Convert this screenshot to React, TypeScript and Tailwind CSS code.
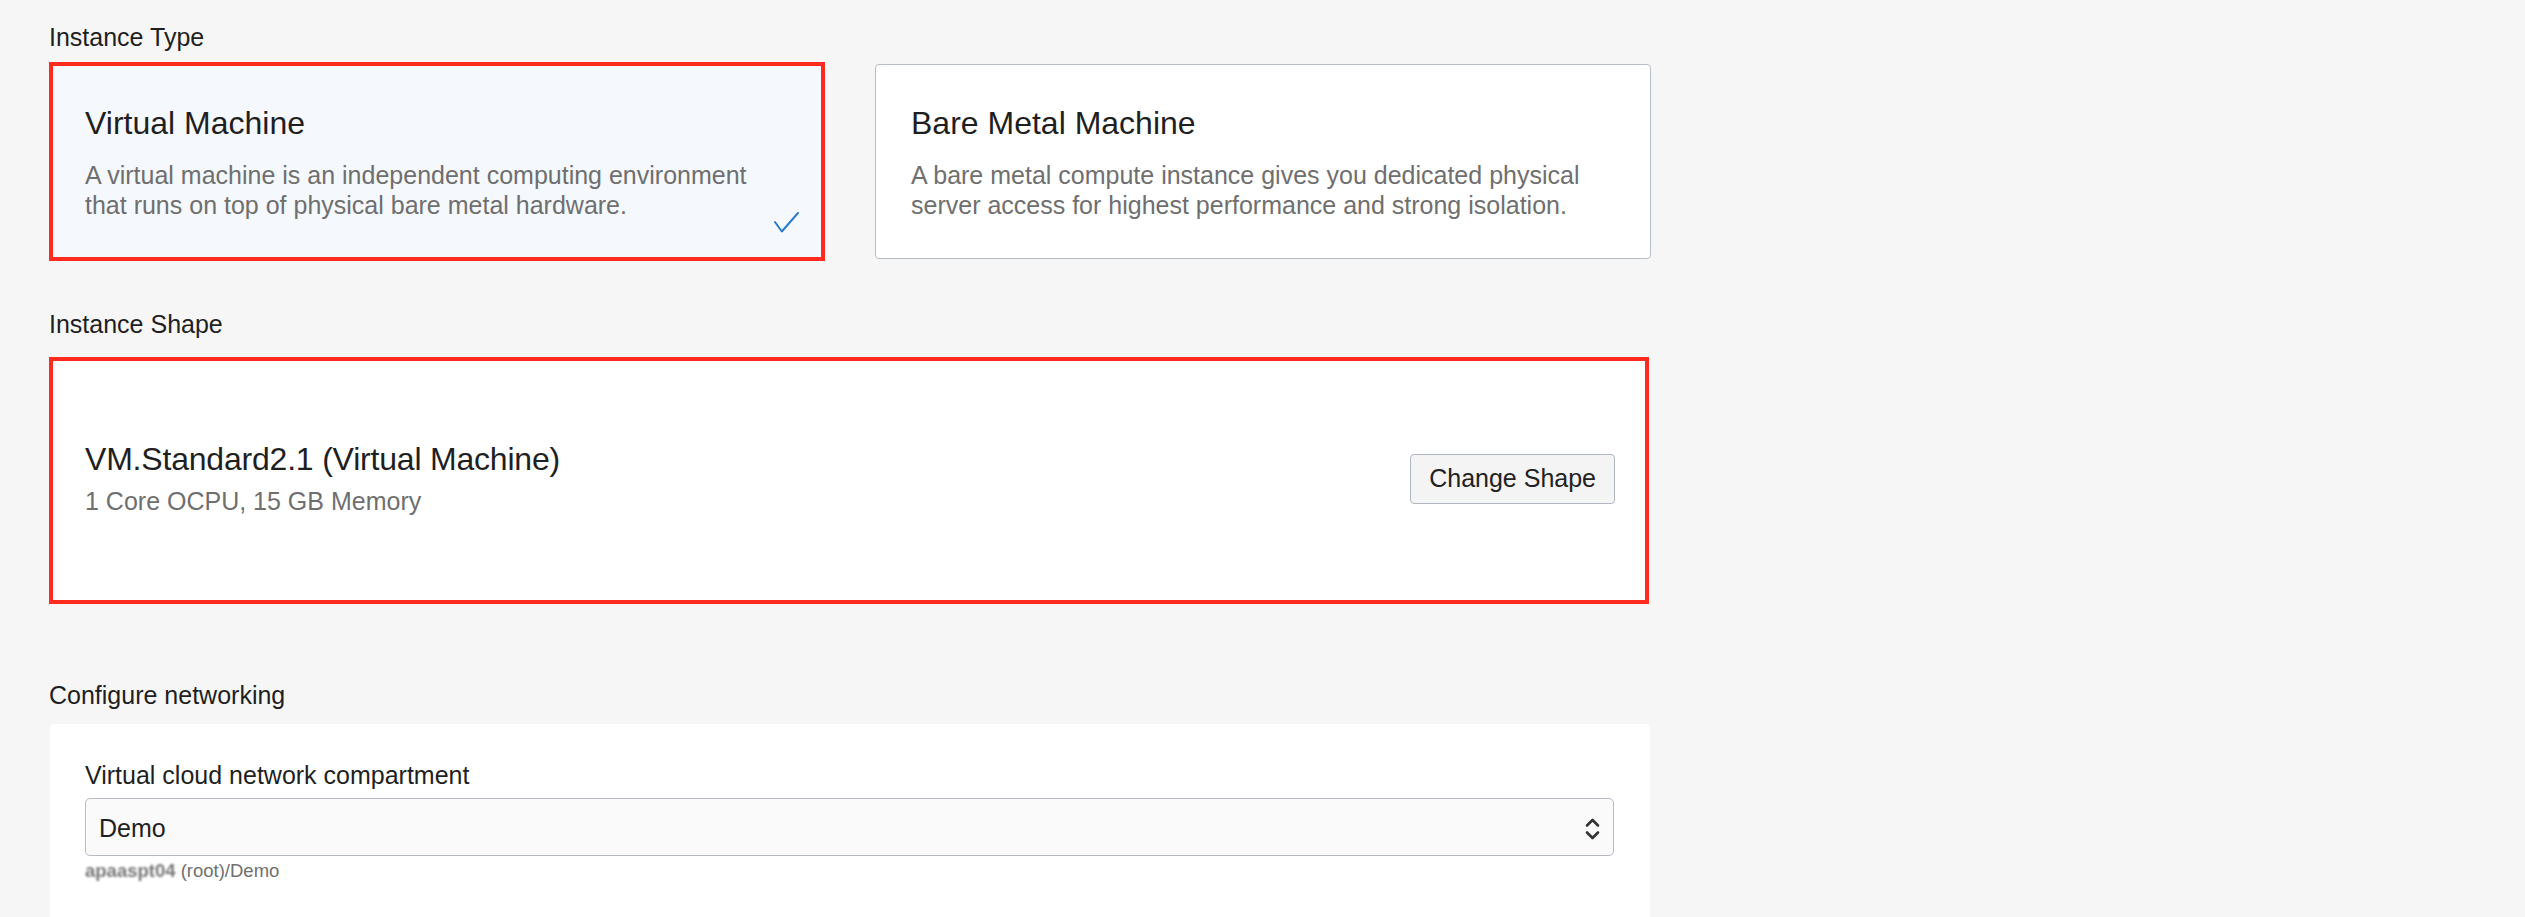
import * as React from "react";

function CheckMark() {
  return (
    <svg width="25" height="21" viewBox="0 0 25 21" fill="none">
      <path d="M1 10 L7.8 19.5 L24 1" stroke="#2a7bd0" strokeWidth="2" strokeLinecap="round" strokeLinejoin="round" />
    </svg>
  );
}

function UpDown() {
  return (
    <svg width="15" height="22" viewBox="0 0 15 22" fill="none">
      <path d="M2 7.5 L7.5 2 L13 7.5" stroke="#333" strokeWidth="2.6" strokeLinecap="round" strokeLinejoin="round" />
      <path d="M2 14.5 L7.5 20 L13 14.5" stroke="#333" strokeWidth="2.6" strokeLinecap="round" strokeLinejoin="round" />
    </svg>
  );
}

export default function App() {
  return (
    <div className="min-h-screen bg-[#f6f6f6] font-['Liberation_Sans',Arial,sans-serif] text-[#1f1f1f]">
      <div className="ml-[49px] w-[1602px] pt-[22px]">
        {/* instance type */}
        <div className="text-[25px] leading-[30px]">Instance Type</div>
        <div className="mt-[10px] grid grid-cols-2 items-center gap-x-[50px]">
          <div className="relative flex h-[199px] flex-col justify-center border-4 border-[#ff2b1f] bg-[#f5f8fc] px-[32px]">
            <div className="text-[32px] leading-[40px]">Virtual Machine</div>
            <div className="mt-[17px] text-[25px] leading-[30px] text-[#6f6f6f]">
              A virtual machine is an independent computing environment that runs on top of physical bare metal hardware.
            </div>
            <div className="absolute right-[22px] bottom-[24px]">
              <CheckMark />
            </div>
          </div>
          <div className="flex h-[195px] flex-col justify-center rounded-[4px] border border-[#b8bec8] bg-white px-[35px]">
            <div className="text-[32px] leading-[40px]">Bare Metal Machine</div>
            <div className="mt-[17px] text-[25px] leading-[30px] text-[#6f6f6f]">
              A bare metal compute instance gives you dedicated physical server access for highest performance and strong isolation.
            </div>
          </div>
        </div>

        {/* instance shape */}
        <div className="mt-[48px] text-[25px] leading-[30px]">Instance Shape</div>
        <div className="mt-[18px] flex h-[247px] w-[1600px] items-center justify-between border-4 border-[#ff2b1f] bg-white pb-[6px] pl-[32px] pr-[30px]">
          <div>
            <div className="text-[32px] leading-[40px] tracking-[-0.2px]">VM.Standard2.1 (Virtual Machine)</div>
            <div className="mt-[7px] text-[25px] leading-[30px] text-[#6f6f6f]">1 Core OCPU, 15 GB Memory</div>
          </div>
          <button className="mt-[3px] h-[50px] rounded-[4px] border border-[#b1b7c0] bg-[#f4f4f4] px-[18px] text-[25px] text-[#222]">
            Change Shape
          </button>
        </div>

        {/* networking */}
        <div className="mt-[76px] text-[25px] leading-[30px]">Configure networking</div>
        <div className="mt-[14px] ml-[1px] w-[1600px] rounded-[4px] bg-white pt-[36px] pb-[40px] pl-[35px] pr-[36px]">
          <div className="text-[25px] leading-[30px]">Virtual cloud network compartment</div>
          <div className="mt-[8px] flex h-[58px] items-center justify-between rounded-[5px] border border-[#b5bac3] bg-[#fafafa] pl-[13px] pr-[13px] pt-[3px]">
            <span className="text-[25px]">Demo</span>
            <UpDown />
          </div>
          <div className="mt-[4px] text-[18.5px] leading-[22px] text-[#6f6f6f]">
            <span className="inline-block blur-[1px] font-bold text-[#777]">apaaspt04</span> (root)/Demo
          </div>
        </div>
      </div>
    </div>
  );
}
